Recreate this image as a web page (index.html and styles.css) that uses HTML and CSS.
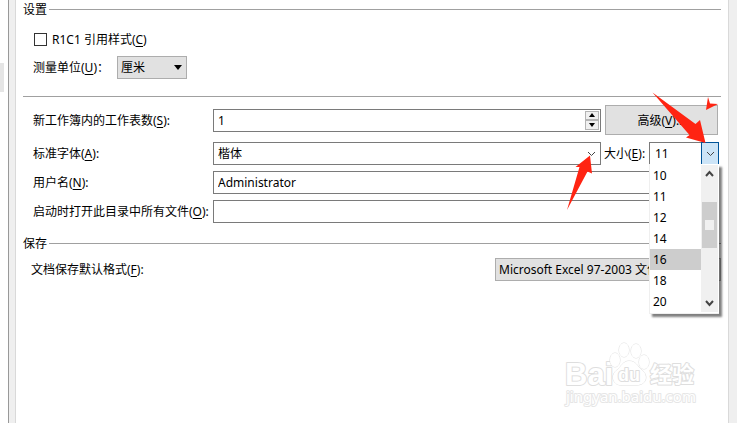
FILE: index.html
```
<!DOCTYPE html>
<html lang="zh-CN">
<head>
    <meta charset="UTF-8">
    <meta name="viewport" content="width=device-width, initial-scale=1.0">
    <title>选项</title>
    <link rel="stylesheet" href="styles.css">
</head>
<body>
    <div class="window">
        <div class="sidebar"><div class="sidebar-item"></div></div>
        <form class="panel">
            <h2 class="heading">设置</h2>
            <div class="row check-row">
                <input type="checkbox" id="r1c1">
                <label for="r1c1">R1C1 引用样式(<u>C</u>)</label>
            </div>
            <div class="row unit-row">
                <label for="unit">测量单位(<u>U</u>)：</label>
                <span class="drop">
                    <select class="gray-select" id="unit"><option>厘米</option></select>
                    <svg class="drop-icon" width="8" height="5" viewBox="0 0 8 5"><path d="M0 0h8L4 5z"/></svg>
                </span>
            </div>
            <hr>
            <div class="row tall">
                <label class="name" for="sheets">新工作簿内的工作表数(<u>S</u>):</label>
                <span class="field spin">
                    <input type="text" id="sheets" value="1">
                    <span class="spin-buttons">
                        <button type="button" aria-label="增加"><svg width="6" height="4" viewBox="0 0 6 4"><path d="M0 4h6L3 0z"/></svg></button>
                        <button type="button" aria-label="减少"><svg width="6" height="4" viewBox="0 0 6 4"><path d="M0 0h6L3 4z"/></svg></button>
                    </span>
                </span>
                <button type="button" class="advanced">高级(<u>V</u>)...</button>
            </div>
            <div class="row">
                <label class="name" for="font">标准字体(<u>A</u>):</label>
                <span class="field drop">
                    <select id="font"><option>楷体</option></select>
                    <svg class="chevron" width="9" height="6" viewBox="0 0 9 6"><path d="M1 1l3.500 3.500L8 1"/></svg>
                </span>
                <span class="size">
                    <label for="size">大小(<u>E</u>):</label>
                    <span class="drop size-box">
                        <select id="size"><option>11</option></select>
                        <span class="size-button"><svg width="9" height="6" viewBox="0 0 9 6"><path d="M1 1l3.500 3.500L8 1"/></svg></span>
                        <span class="menu">
                            <ul role="listbox" aria-label="大小">
                                <li role="option">10</li>
                                <li role="option">11</li>
                                <li role="option">12</li>
                                <li role="option">14</li>
                                <li role="option" class="selected" aria-selected="true">16</li>
                                <li role="option">18</li>
                                <li role="option">20</li>
                            </ul>
                            <span class="scrollbar">
                                <svg width="9" height="7" viewBox="0 0 9 7"><path d="M1 6l3.500-4L8 6"/></svg>
                                <span class="thumb"><i></i></span>
                                <svg width="9" height="7" viewBox="0 0 9 7"><path d="M1 1l3.500 4L8 1"/></svg>
                            </span>
                        </span>
                    </span>
                </span>
            </div>
            <div class="row">
                <label class="name" for="user">用户名(<u>N</u>):</label>
                <input class="field" type="text" id="user" value="Administrator">
            </div>
            <div class="row">
                <label class="name" for="folder">启动时打开此目录中所有文件(<u>O</u>):</label>
                <input class="field" type="text" id="folder">
            </div>
            <h2 class="heading save">保存</h2>
            <div class="row format-row">
                <label for="format">文档保存默认格式(<u>F</u>):</label>
                <select class="gray-select" id="format"><option>Microsoft Excel 97-2003 文件</option></select>
            </div>

            <svg class="arrows" width="160" height="130" viewBox="560 85 160 130">
                <path d="M590 155.500L575.500 167L579.500 167L567 210L587.500 171.500L592 173.500z"/>
                <path d="M652.500 92.500L689.500 135L686 137.500L705.500 143L700 120L695.500 124z"/>
                <path d="M708 97L710 103.500L718 104L706 110z"/>
            </svg>
            <svg class="watermark" width="140" height="68" viewBox="560 340 140 68">
                <text class="brand" x="565" y="385">Bai</text>
                <g class="paw">
                    <ellipse cx="615" cy="360" rx="5" ry="7"/>
                    <ellipse cx="624" cy="350" rx="5" ry="7"/>
                    <ellipse cx="636" cy="351" rx="5" ry="7"/>
                    <ellipse cx="644" cy="362" rx="5" ry="7"/>
                    <path d="M629 361c-6 0-8 6-12 9-8 6-3 16 5 15h15c9 0 12-9 5-15-5-4-6-9-13-9z"/>
                </g>
                <text class="du" x="618" y="381">du</text>
                <text class="cjk" x="650" y="382">经验</text>
                <text class="url" x="566" y="402">jingyan.baidu.com</text>
            </svg>
        </form>
    </div>
</body>
</html>
```
FILE: styles.css
```
*{
    box-sizing: border-box;
}
body{
    margin: 0;
    background-color: white;
    color: black;
    font-family: "Noto Sans", "Noto Sans CJK SC", sans-serif;
    font-size: 12px;
    line-height: 19px;
}
input,select,button{
    font: inherit;
    color: inherit;
    margin: 0;
}
u{
    text-underline-offset: 2px;
}
.window{
    display: flex;
    min-height: 100vh;
    overflow: hidden;
    background-color: #efefef;
}
.sidebar{
    width: 9px;
    background-color: white;
    border-right: 1px solid #999;
    padding-top: 63px;
}
.sidebar-item{
    width: 4px;
    height: 29px;
    background-color: #e5e5e5;
}
.panel{
    position: relative;
    flex: 1;
    margin: 0 8px 0 6px;
    padding: 0 7px;
    background-color: white;
    border: solid #d9d9d9;
    border-width: 0 1px;
}
.heading{
    display: flex;
    align-items: center;
    gap: 2px;
    margin: 0;
    font-size: 12px;
    font-weight: normal;
}
.heading::after{
    content: "";
    flex: 1;
    height: 1px;
    background-color: #a0a0a0;
}
.row{
    display: flex;
    align-items: center;
    height: 23px;
    margin-bottom: 6px;
    padding: 0 2px 0 10px;
    white-space: nowrap;
}
.check-row{
    gap: 5px;
    margin-top: 9px;
    margin-bottom: 5px;
    padding-left: 11px;
}
.check-row input{
    appearance: none;
    width: 13px;
    height: 13px;
    border: 1px solid #333;
}
.unit-row{
    margin: 0;
}
.unit-row label{
    width: 84px;
}
.unit-row select{
    width: 70px;
}
hr{
    height: 1px;
    margin: 17px 0 8px;
    border: 0;
    background-color: #a0a0a0;
}
.tall{
    height: 30px;
    margin-bottom: 7px;
}
.name{
    width: 180px;
}
.field{
    flex: 1;
    min-width: 0;
}
input[type="text"],select{
    appearance: none;
    height: 23px;
    padding: 0 4px;
    border: 1px solid #7a7a7a;
    border-radius: 0;
    background-color: white;
}
.gray-select{
    background-color: #e1e1e1;
    border-color: #adadad;
    padding: 0 3px;
}
.drop,.spin{
    position: relative;
    display: flex;
}
.spin input,.field select{
    width: 100%;
}
.drop-icon,.chevron{
    position: absolute;
    top: 9px;
    right: 5px;
}
.chevron,.size-button svg,.scrollbar svg{
    fill: none;
    stroke: #444;
}
.spin-buttons{
    position: absolute;
    top: 2px;
    right: 2px;
    bottom: 2px;
    width: 14px;
    display: flex;
    flex-direction: column;
}
.spin-buttons button{
    flex: 1;
    display: flex;
    align-items: center;
    justify-content: center;
    padding: 0;
    border: 1px solid #b4b4b4;
    background-color: #f0f0f0;
}
.advanced{
    width: 113px;
    height: 30px;
    margin: 0 1px 0 4px;
    padding: 0;
    border: 1px solid #adadad;
    background-color: #e1e1e1;
}
.size{
    display: flex;
    align-items: center;
    justify-content: space-between;
    width: 118px;
    padding-left: 3px;
}
.size-box,.size-box select{
    width: 70px;
}
.size-box select{
    padding: 0 5px;
}
.size-button{
    position: absolute;
    top: 0;
    right: 0;
    width: 18px;
    height: 23px;
    display: flex;
    align-items: center;
    justify-content: center;
    border: 1px solid #005499;
    background-color: #cce4f7;
    pointer-events: none;
}
.menu{
    position: absolute;
    top: 22px;
    left: 0;
    z-index: 1;
    display: flex;
    width: 70px;
    padding: 1px 1px 1px 0;
    background-color: white;
    border: solid #efefef;
    border-width: 0 0 1px 1px;
    box-shadow: 3px 3px 2px rgba(0,0,0,0.5);
}
.menu ul{
    flex: 1;
    margin: 0;
    padding: 0;
    list-style: none;
}
.menu li{
    height: 21px;
    padding-left: 3px;
    line-height: 21px;
}
.menu .selected{
    background-color: #cdcdcd;
}
.scrollbar{
    display: flex;
    flex-direction: column;
    align-items: center;
    width: 17px;
    padding: 5px 0;
    background-color: #f0f0f0;
}
.scrollbar svg{
    stroke-width: 2;
}
.thumb{
    width: 15px;
    height: 46px;
    margin: 25px 0 auto;
    padding: 18px 3px;
    background-color: #cdcdcd;
}
.thumb i{
    display: block;
    height: 10px;
    background-color: #f0f0f0;
}
.save{
    margin: 11px 0 5px;
}
.format-row{
    justify-content: space-between;
    padding: 0 0 0 8px;
}
.format-row select{
    width: 226px;
}
.arrows{
    position: absolute;
    top: 85px;
    right: 8px;
    z-index: 2;
    fill: #ff2412;
    pointer-events: none;
}
.watermark{
    position: absolute;
    top: 340px;
    right: 28px;
    fill: white;
    stroke: #dedede;
    stroke-width: 2px;
    stroke-linejoin: round;
    paint-order: stroke;
}
.paw{
    stroke-width: 1px;
}
.brand,.du{
    font-family: "Liberation Sans", sans-serif;
    font-weight: bold;
}
.brand{
    font-size: 31px;
}
.du{
    font-size: 18px;
}
.cjk{
    font-family: "Noto Sans CJK SC", sans-serif;
    font-size: 22px;
    font-weight: bold;
}
.url{
    font-size: 15px;
    stroke: #e6e6e6;
}
```
